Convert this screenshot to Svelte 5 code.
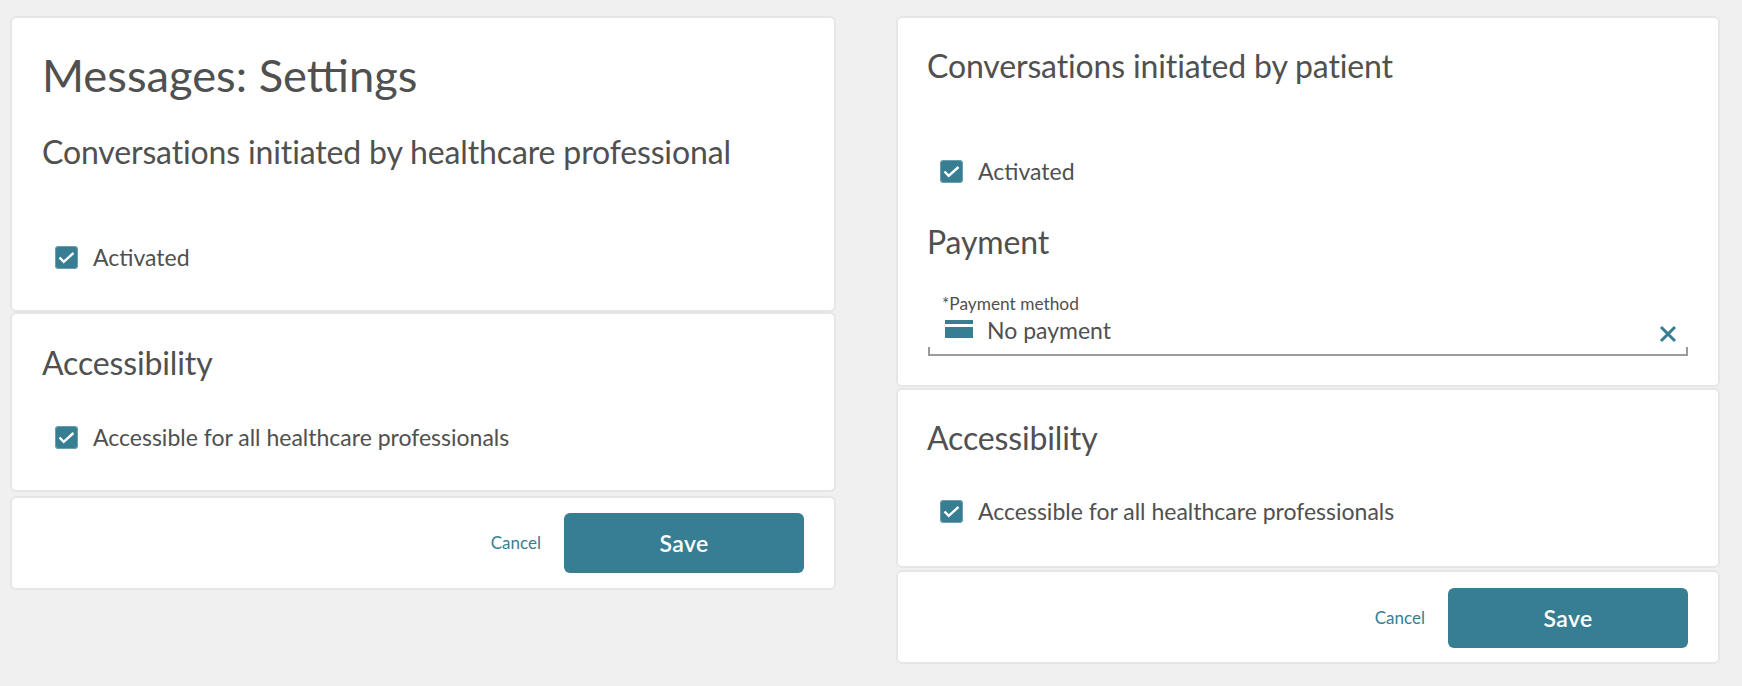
<script lang="ts">
	const initiators = 'Conversations initiated by';
</script>

{#snippet check(label: string)}
	<label class="check">
		<span class="box">
			<svg viewBox="0 0 23 23" width="23" height="23">
				<path d="M4.5 11.5l4.2 4.4 9.8-8.9" fill="none" stroke="#fff" stroke-width="2.4" />
			</svg>
		</span>
		{label}
	</label>
{/snippet}

{#snippet footer()}
	<section class="card actions">
		<a class="cancel" href="#cancel">Cancel</a>
		<button class="save">Save</button>
	</section>
{/snippet}

<main class="page">
	<div class="column left">
		<section class="card first">
			<h1>Messages: Settings</h1>
			<h2 class="sub">{initiators} healthcare professional</h2>
			{@render check('Activated')}
		</section>
		<section class="card access">
			<h2>Accessibility</h2>
			{@render check('Accessible for all healthcare professionals')}
		</section>
		{@render footer()}
	</div>

	<div class="column right">
		<section class="card patient">
			<h2>{initiators} patient</h2>
			{@render check('Activated')}
			<h2 class="payment">Payment</h2>
			<div class="field">
				<div class="field-label">*Payment method</div>
				<div class="field-value">
					<svg class="card-icon" viewBox="0 0 28 18" width="28" height="18">
						<rect width="28" height="4" fill="#387e93" />
						<rect y="7" width="28" height="11" fill="#387e93" />
					</svg>
					<span>No payment</span>
					<svg class="clear" viewBox="0 0 18 18" width="18" height="18">
						<path d="M2 2l14 14M16 2L2 16" stroke="#387e93" stroke-width="3" fill="none" />
					</svg>
				</div>
				<div class="field-line"></div>
			</div>
		</section>
		<section class="card access">
			<h2>Accessibility</h2>
			{@render check('Accessible for all healthcare professionals')}
		</section>
		{@render footer()}
	</div>
</main>

<style>
	:global(body) {
		margin: 0;
		background: #f0f0f0;
	}

	.page {
		display: grid;
		grid-template-columns: 826px 824px;
		column-gap: 60px;
		padding: 16px 0 0 10px;
		height: 670px;
		font-family: Lato, 'Noto Sans', sans-serif;
		color: #505050;
	}

	.column {
		display: flex;
		flex-direction: column;
	}

	.card {
		background: #fff;
		border: 2px solid #e6e6e6;
		border-radius: 6px;
		padding: 0 30px;
		box-sizing: border-box;
	}

	h1 {
		margin: 0;
		font-size: 45.3px;
		font-weight: 400;
		line-height: 56px;
	}

	h2 {
		margin: 0;
		font-size: 32px;
		font-weight: 400;
		line-height: 40px;
		letter-spacing: -0.14px;
	}

	.right h2 {
		margin-left: -1px;
	}

	.first {
		height: 296px;
		padding-top: 29px;
	}

	.first .sub {
		margin-top: 29px;
	}

	.first .check {
		margin-top: 72px;
	}

	.access {
		height: 180px;
		padding-top: 29px;
	}

	.left .actions {
		margin-top: 4px;
		padding-bottom: 1px;
	}

	.right .actions {
		margin-top: 2px;
		padding-top: 1px;
	}

	.access .check {
		margin-top: 41px;
	}

	.patient {
		height: 371px;
		padding-top: 28px;
		margin-bottom: 1px;
	}

	.right .access {
		padding-top: 28px;
	}

	.right .access .check {
		margin-top: 40px;
	}

	.patient .check {
		margin-top: 72px;
	}

	.right .payment {
		margin-top: 38px;
	}

	.check {
		display: flex;
		align-items: center;
		gap: 15px;
		margin-left: 13px;
		font-size: 23px;
		line-height: 26px;
	}

	.right .check {
		margin-left: 12px;
	}

	.box {
		display: block;
		width: 23px;
		height: 23px;
		background: #387e93;
		border-radius: 4px;
		box-shadow: 0 0 0 1px #6b9fae inset;
	}

	.box svg {
		display: block;
	}

	.field {
		margin-top: 30px;
	}

	.field-label {
		padding-left: 14px;
		font-size: 17.3px;
		line-height: 23px;
	}

	.field-value {
		display: flex;
		align-items: center;
		padding: 0 11px 0 17px;
		height: 30px;
		font-size: 23px;
	}

	.card-icon {
		margin-right: 14px;
		margin-top: -3px;
	}

	.clear {
		margin-left: auto;
		margin-top: 8px;
	}

	.field-line {
		height: 7px;
		margin-top: 2px;
		border: solid #9b9b9b;
		border-width: 0 2px 2px;
	}

	.actions {
		display: flex;
		align-items: center;
		justify-content: flex-end;
		height: 94px;
		gap: 23px;
	}

	.cancel {
		font-size: 17px;
		color: #387e93;
		text-decoration: none;
	}

	.save {
		width: 240px;
		height: 60px;
		border: 0;
		border-radius: 6px;
		background: #387e93;
		color: #fff;
		font: 600 23px Lato, 'Noto Sans', sans-serif;
		letter-spacing: 0.4px;
	}
</style>
